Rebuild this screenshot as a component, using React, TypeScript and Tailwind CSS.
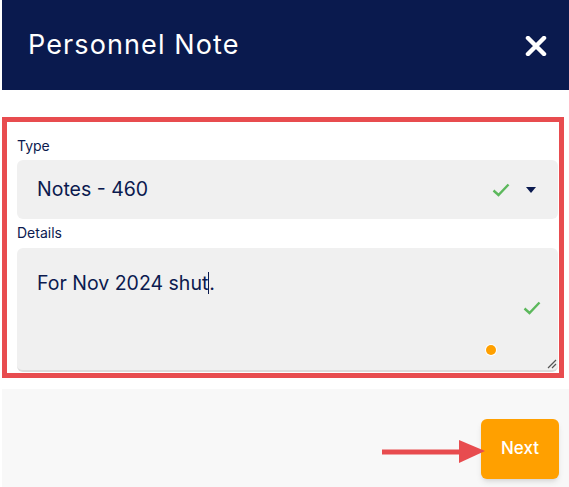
import React from "react";

const navy = "text-[#0b1a4f]";

function Check({ className }: { className?: string }) {
  return (
    <svg className={className} width="18" height="14" viewBox="0 0 18 14" fill="none">
      <path d="M1.5 7.5 L6.5 12 L16.5 1.5" stroke="#5cb85c" strokeWidth="2.4" />
    </svg>
  );
}

export default function App() {
  return (
    <div className="relative w-[569px] h-[487px] bg-white overflow-hidden" style={{ fontFamily: "Inter, Roboto, sans-serif" }}>
      {/* Header */}
      <header className="ml-[2px] h-[90px] bg-[#0a1a4e] flex items-center justify-between pl-[26px] pr-[22px]">
        <h1 className="text-[27px] text-white leading-none pb-[2px] tracking-[1.1px]">Personnel Note</h1>
        <svg width="22" height="20" viewBox="0 0 22 20" className="mt-[2px]">
          <path d="M3 2 L19 18 M19 2 L3 18" stroke="white" strokeWidth="4.5" strokeLinecap="round" />
        </svg>
      </header>

      {/* Form (highlighted) */}
      <section className="mt-[27px] ml-[2px] w-[562px] border-[5px] border-[#e84c4f] pl-[10px] pr-[1px] pt-[14px] pb-[1px]">
        <label className={`block h-[20px] text-[14px] leading-[20px] ${navy}`}>Type</label>
        <div className="mt-[4px] h-[59px] rounded-md bg-[#f0f0f0] flex items-center pl-[20px] pr-[22px]">
          <span className={`text-[19.5px] ${navy}`}>Notes - 460</span>
          <Check className="ml-auto" />
          <svg width="10" height="6" viewBox="0 0 10 6" className="ml-[16px]">
            <path d="M0 0 H10 L5 6 Z" fill="#0b1a4f" />
          </svg>
        </div>

        <label className={`block mt-[4px] h-[20px] text-[14px] leading-[20px] ${navy}`}>Details</label>
        <div className="relative mt-[5px] h-[124px] rounded-md bg-[#f0f0f0] border-b-2 border-[#dcdcdc] pl-[20px] pt-[21px]">
          <p className={`text-[19.5px] leading-[28px] ${navy}`}>
            For Nov 2024 shut<span className="inline-block w-px h-[22px] bg-[#0b1a4f] align-[-4px]" />.
          </p>
          <Check className="absolute right-[17px] top-[53px]" />
          <span className="absolute left-[469px] top-[97px] w-[10px] h-[10px] rounded-full bg-[#ffa000] ring-1 ring-white" />
          <svg width="10" height="10" viewBox="0 0 10 10" className="absolute right-[1px] bottom-[1px]">
            <path d="M1 9 L9 1 M5 9 L9 5" stroke="#555" strokeWidth="1.2" />
          </svg>
        </div>
      </section>

      {/* Footer */}
      <footer className="mt-[11px] ml-[2px] h-[98px] bg-[#f8f8f8] flex items-start justify-end pt-[30px] pr-[10px]">
        <button className="w-[78px] h-[60px] rounded-md bg-[#ffa000] text-white text-[17px] font-medium shadow-md">
          Next
        </button>
      </footer>

      {/* Annotation arrow */}
      <svg width="106" height="26" viewBox="0 0 106 26" className="absolute left-[381px] top-[439px]">
        <path d="M1 13 H82" stroke="#e84c4f" strokeWidth="5" />
        <path d="M78 1 L104 12 L78 24 Z" fill="#e84c4f" />
      </svg>
    </div>
  );
}
